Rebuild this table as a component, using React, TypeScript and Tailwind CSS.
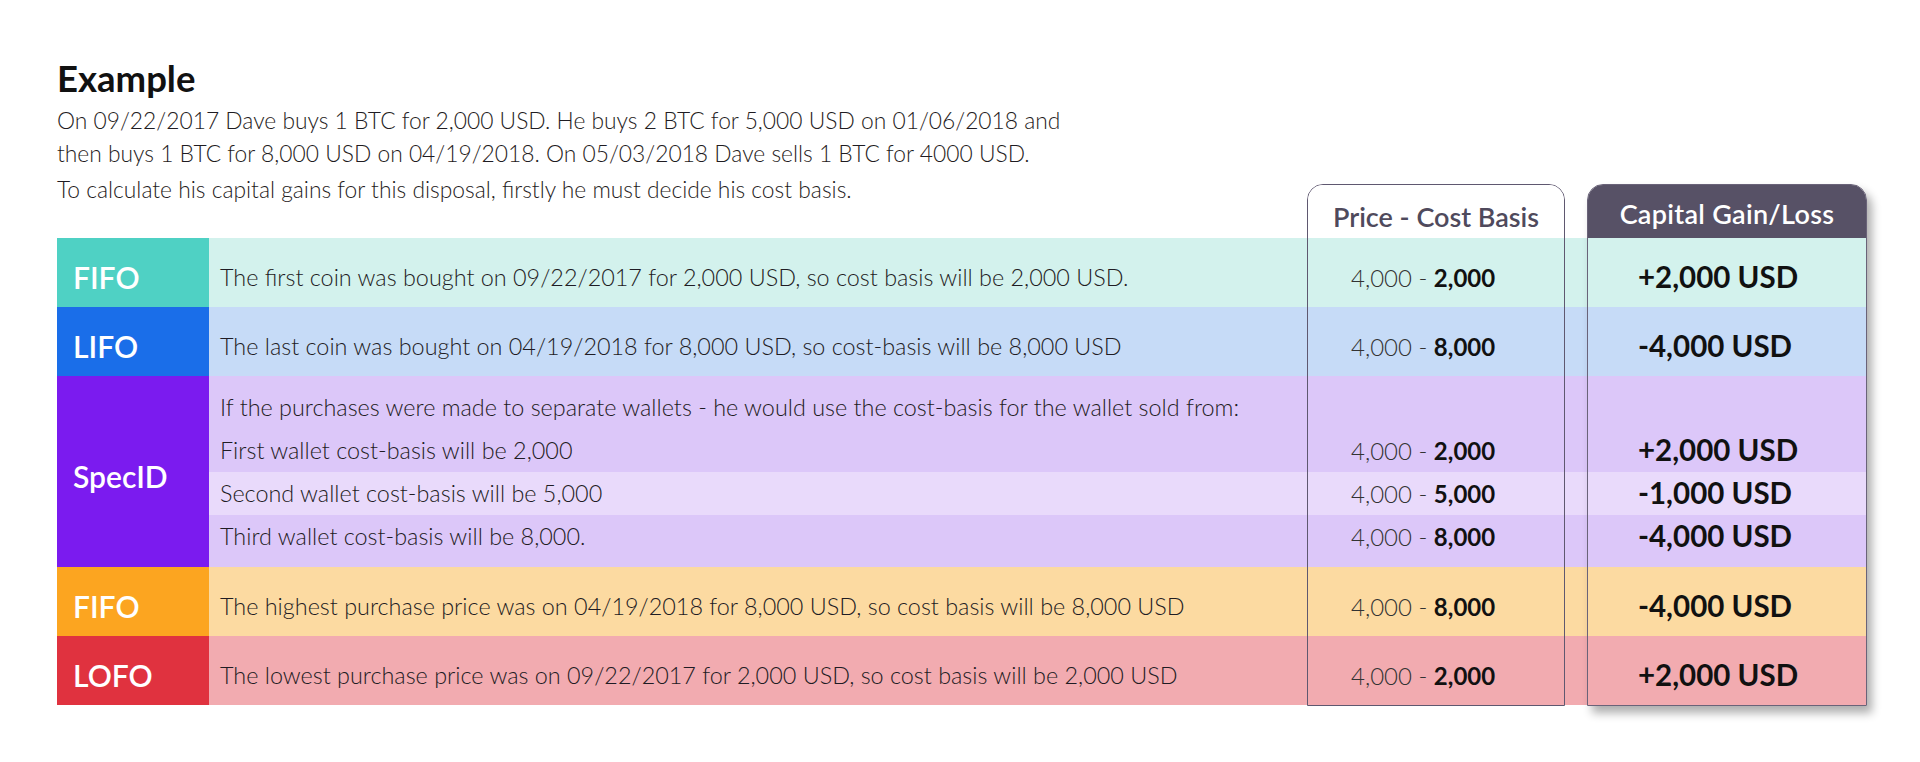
const segments = [
    {
        h: "h-[69px]", bg: "bg-[#d3f2ed]", pad: "pb-[8px]",
        desc: ["The first coin was bought on 09/22/2017 for 2,000 USD, so cost basis will be 2,000 USD."],
        base: "2,000", gain: "+2,000 USD",
    },
    {
        h: "h-[69px]", bg: "bg-[#c6dbf7]", pad: "pb-[8px]",
        desc: ["The last coin was bought on 04/19/2018 for 8,000 USD, so cost-basis will be 8,000 USD"],
        base: "8,000", gain: "-4,000 USD",
    },
    {
        h: "h-[96px]", bg: "bg-[#dcc7f9]", pad: "",
        desc: [
            "If the purchases were made to separate wallets - he would use the cost-basis for the wallet sold from:",
            "First wallet cost-basis will be 2,000",
        ],
        base: "2,000", gain: "+2,000 USD",
    },
    {
        h: "h-[43px]", bg: "bg-[#e9dafb]", pad: "",
        desc: ["Second wallet cost-basis will be 5,000"],
        base: "5,000", gain: "-1,000 USD",
    },
    {
        h: "h-[52px]", bg: "bg-[#dcc7f9]", pad: "pb-[9px]",
        desc: ["Third wallet cost-basis will be 8,000."],
        base: "8,000", gain: "-4,000 USD",
    },
    {
        h: "h-[69px]", bg: "bg-[#fcdaa1]", pad: "pb-[8px]",
        desc: ["The highest purchase price was on 04/19/2018 for 8,000 USD, so cost basis will be 8,000 USD"],
        base: "8,000", gain: "-4,000 USD",
    },
    {
        h: "h-[69px]", bg: "bg-[#f2abb0]", pad: "pb-[8px]",
        desc: ["The lowest purchase price was on 09/22/2017 for 2,000 USD, so cost basis will be 2,000 USD"],
        base: "2,000", gain: "+2,000 USD",
    },
];

const methods = [
    { label: "FIFO", h: "h-[69px]", bg: "bg-[#4fd1c4]" },
    { label: "LIFO", h: "h-[69px]", bg: "bg-[#1a6ee9]" },
    { label: "SpecID", h: "h-[191px]", bg: "bg-[#7b1bef]" },
    { label: "FIFO", h: "h-[69px]", bg: "bg-[#fca520]" },
    { label: "LOFO", h: "h-[69px]", bg: "bg-[#e0323f]" },
];

export default function App() {
    return (
        <div className="min-h-[762px] bg-white pl-[57px] font-['Lato','Liberation_Sans',sans-serif]">
            {/* Intro */}
            <div className="pt-[58px]">
                <h2 className="text-[36.5px] leading-[40px] font-bold text-[#111]">Example</h2>
                <p className="mt-[6px] text-[22.8px] leading-[33px] font-light text-[#1f1c22]">
                    On 09/22/2017 Dave buys 1 BTC for 2,000 USD. He buys 2 BTC for 5,000 USD on 01/06/2018 and
                    <br />
                    then buys 1 BTC for 8,000 USD on 04/19/2018. On 05/03/2018 Dave sells 1 BTC for 4000 USD.
                </p>
                <p className="mt-[3px] text-[22.8px] leading-[33px] font-light text-[#1f1c22]">
                    To calculate his capital gains for this disposal, firstly he must decide his cost basis.
                </p>
            </div>

            {/* Table */}
            <div className="-mt-[22px] flex w-[1810px] items-start">
                {/* method labels */}
                <div className="mt-[54px] flex w-[152px] flex-col">
                    {methods.map((m, i) => (
                        <div
                            key={i}
                            className={`flex items-center pl-[16px] pt-[9px] ${m.h} ${m.bg} text-[30px] font-semibold text-white`}
                        >
                            {m.label}
                        </div>
                    ))}
                </div>

                {/* descriptions */}
                <div className="mt-[54px] flex w-[1098px] flex-col">
                    {segments.map((s, i) => (
                        <div key={i} className={`flex flex-col justify-end ${s.h} ${s.bg} ${s.pad}`}>
                            {s.desc.map((line, j) => (
                                <div
                                    key={j}
                                    className="flex h-[43px] items-center pl-[11px] text-[23.4px] font-light text-[#1f1c24]"
                                >
                                    {line}
                                </div>
                            ))}
                        </div>
                    ))}
                </div>

                {/* price - cost basis */}
                <div className="flex w-[258px] flex-col overflow-hidden rounded-t-[16px] border border-[#5f5870]">
                    <div className="flex h-[53px] items-center justify-center bg-white pt-[12px] text-[27px] font-semibold text-[#4f4a5c]">
                        Price - Cost Basis
                    </div>
                    {segments.map((s, i) => (
                        <div key={i} className={`flex flex-col justify-end ${s.h} ${s.bg} ${s.pad}`}>
                            <div className="flex h-[43px] items-center pl-[43px] text-[24px] text-[#333]">
                                <span className="font-light">4,000 -&nbsp;</span>
                                <span className="font-bold text-[#111]">{s.base}</span>
                            </div>
                        </div>
                    ))}
                </div>

                {/* spacer between the boxes */}
                <div className="mt-[54px] flex w-[22px] flex-col">
                    {segments.map((s, i) => (
                        <div key={i} className={`${s.h} ${s.bg}`} />
                    ))}
                </div>

                {/* capital gain / loss */}
                <div className="flex w-[280px] flex-col overflow-hidden rounded-t-[16px] border border-[#6a6379] shadow-[5px_7px_10px_rgba(0,0,0,0.32)]">
                    <div className="flex h-[53px] items-center justify-center bg-[#575166] pt-[6px] text-[27px] font-semibold tracking-[0.3px] text-white">
                        Capital Gain/Loss
                    </div>
                    {segments.map((s, i) => (
                        <div key={i} className={`flex flex-col justify-end ${s.h} ${s.bg} ${s.pad}`}>
                            <div className="flex h-[43px] items-center pl-[50px] text-[29.5px] font-bold text-[#111]">
                                {s.gain}
                            </div>
                        </div>
                    ))}
                </div>
            </div>
        </div>
    );
}
